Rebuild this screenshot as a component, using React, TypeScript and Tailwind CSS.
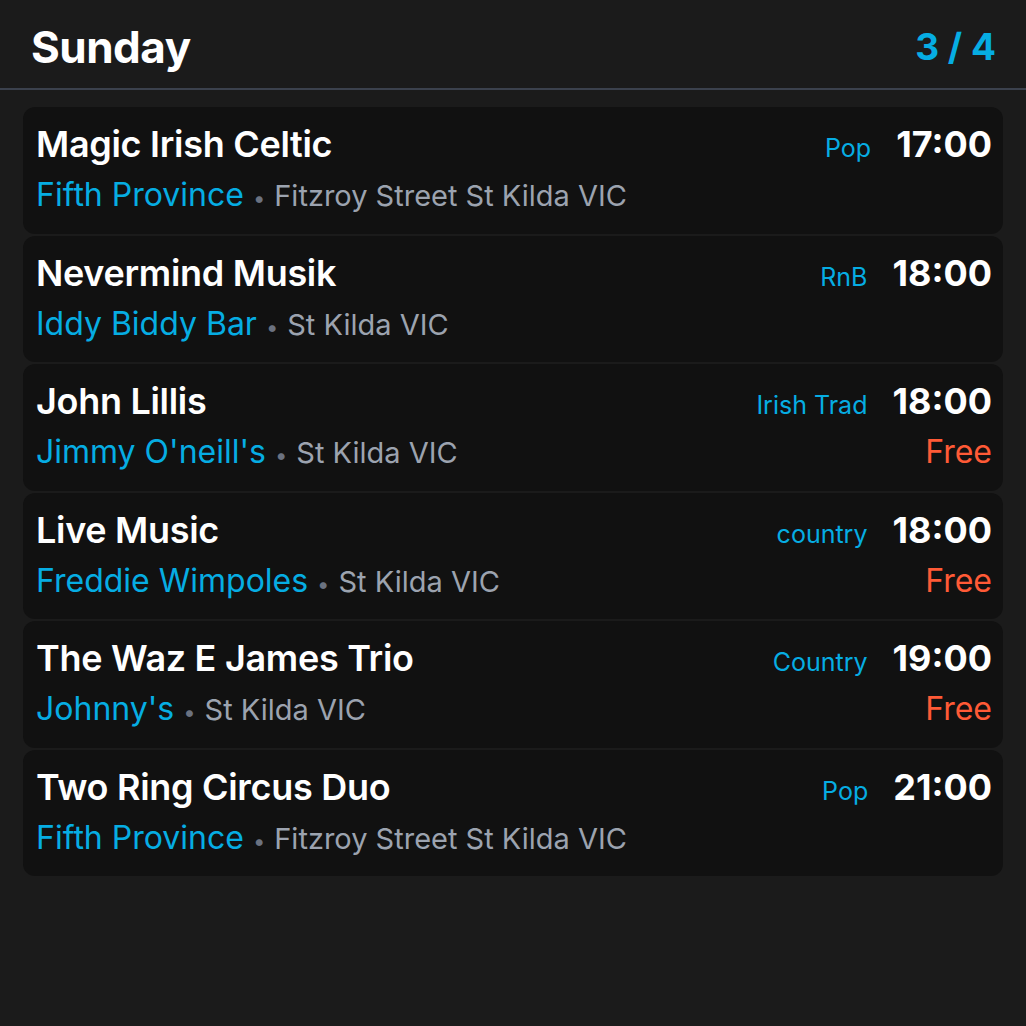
import React from "react";

type Item = { title: string; venue: string; loc: string; genre: string; time: string; free?: boolean };

const items: Item[] = [
  { title: "Magic Irish Celtic", venue: "Fifth Province", loc: "Fitzroy Street St Kilda VIC", genre: "Pop", time: "17:00" },
  { title: "Nevermind Musik", venue: "Iddy Biddy Bar", loc: "St Kilda VIC", genre: "RnB", time: "18:00" },
  { title: "John Lillis", venue: "Jimmy O'neill's", loc: "St Kilda VIC", genre: "Irish Trad", time: "18:00", free: true },
  { title: "Live Music", venue: "Freddie Wimpoles", loc: "St Kilda VIC", genre: "country", time: "18:00", free: true },
  { title: "The Waz E James Trio", venue: "Johnny's", loc: "St Kilda VIC", genre: "Country", time: "19:00", free: true },
  { title: "Two Ring Circus Duo", venue: "Fifth Province", loc: "Fitzroy Street St Kilda VIC", genre: "Pop", time: "21:00" },
];

export default function App() {
  return (
    <div className="w-[1026px] h-[1026px] bg-[#1b1b1b] font-['Inter',sans-serif] overflow-hidden">
      <div className="flex items-center justify-between h-[90px] pt-[6px] pl-[31px] pr-[30px] border-b-2 border-[#3b414d]">
        <div className="text-[44px] font-bold text-white tracking-[-0.5px]">Sunday</div>
        <div className="text-[37px] font-bold text-[#06ade3]">3 / 4</div>
      </div>
      <div className="flex flex-col gap-[2px] px-[23px] pt-[17px]">
        {items.map((it, i) => (
          <div key={i} className="h-[126.5px] rounded-xl bg-[#111111] pl-[13px] pr-[11px] pt-[15px]">
            <div className="flex items-baseline h-[44px]">
              <div className="flex-1 text-[36px] leading-[44px] font-semibold text-white tracking-[-0.3px]">{it.title}</div>
              <div className="text-[25px] text-[#06ade3] mr-[25px]">{it.genre}</div>
              <div className="text-[36px] leading-[44px] font-bold text-white">{it.time}</div>
            </div>
            <div className="flex items-baseline h-[44px] mt-[7px]">
              <div className="flex-1 flex items-baseline leading-[44px]">
                <span className="text-[#06ade3] text-[32px]">{it.venue}</span>
                <span className="text-[#6b7280] text-[22px] mx-[9px]">•</span>
                <span className="text-[#9ca3af] text-[29px]">{it.loc}</span>
              </div>
              {it.free && <div className="text-[32px] leading-[44px] text-[#ff5a36]">Free</div>}
            </div>
          </div>
        ))}
      </div>
    </div>
  );
}
